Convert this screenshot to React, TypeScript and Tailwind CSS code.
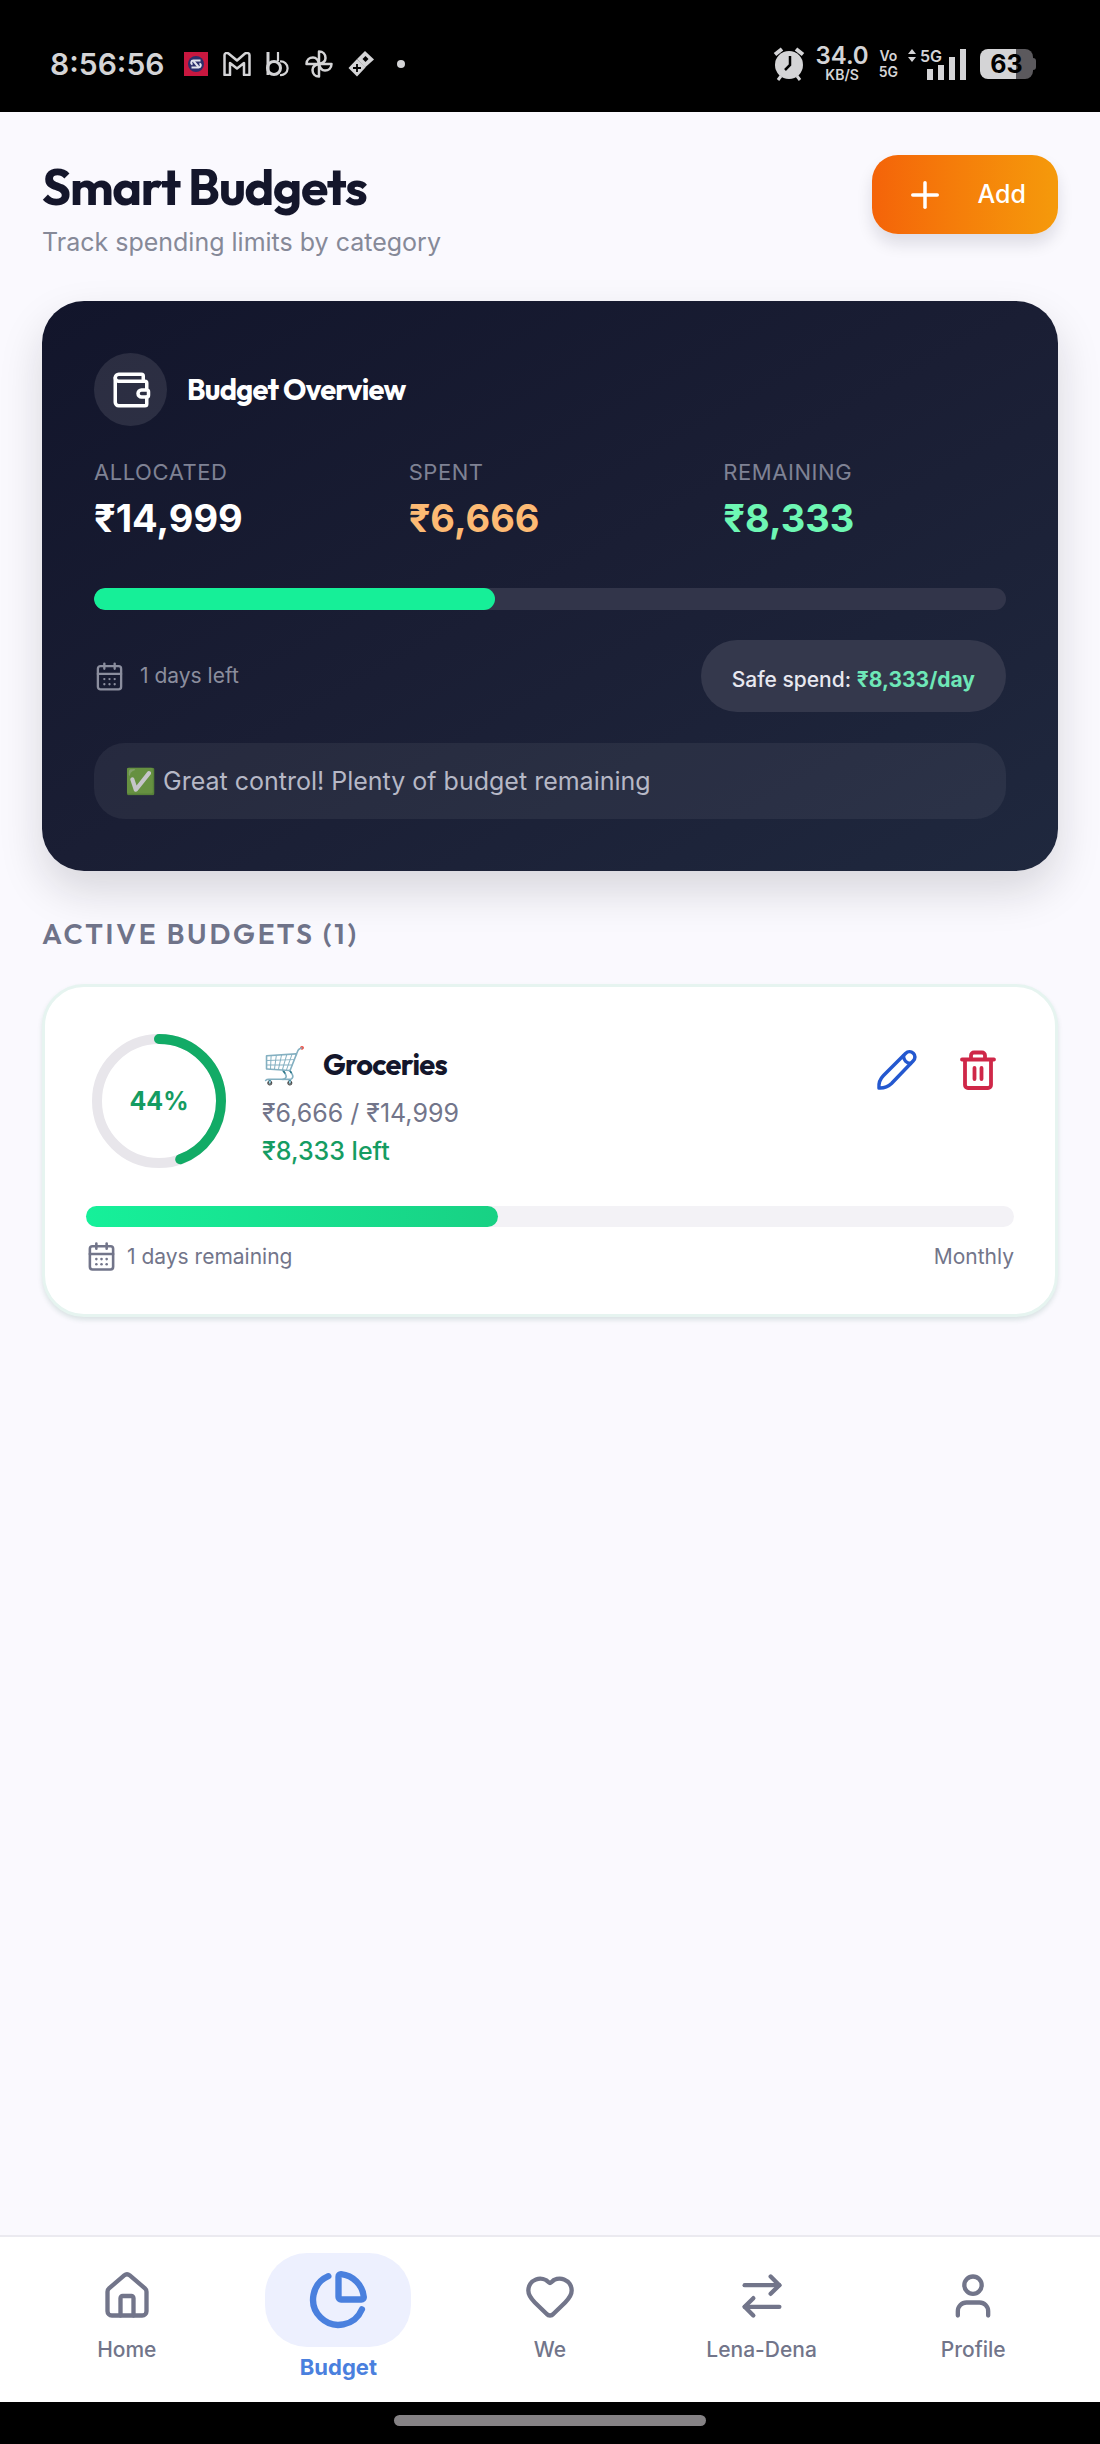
import { type FunctionComponent, type ReactNode } from "react";
import {
  ArrowRightLeft,
  CalendarDays,
  ChartPie,
  Heart,
  House,
  Plus,
  User,
  Wallet,
} from "lucide-react";

const spent = 6666;
const allocated = 14999;
const percent = (spent / allocated) * 100;

const AlarmIcon: FunctionComponent = () => (
  <svg viewBox="0 0 32 34" className="h-[34px] w-8" aria-hidden="true">
    <path d="M2 7.500 9 2M23 2l7 5.500" stroke="#d4d4d6" strokeWidth="4" />
    <path d="M8 29l-3 4M24 29l3 4" stroke="#d4d4d6" strokeWidth="3" />
    <circle cx="16" cy="18" r="14" fill="#d4d4d6" />
    <path d="M17 9v9l-5 5" fill="none" stroke="#000" strokeWidth="2.500" />
  </svg>
);

const NotificationIcons: FunctionComponent = () => (
  <div className="flex items-center gap-[15px] text-[#d4d4d6]">
    <svg viewBox="0 0 24 24" className="size-6" aria-hidden="true">
      <rect width="24" height="24" fill="#c8173f" />
      <circle cx="12" cy="12" r="8" fill="#2c2f6b" />
      <g fill="none" stroke="#e4e4ee" strokeWidth="2">
        <path d="M16.500 8.500H9.500a2.200 2.200 0 0 0-1 4.200" />
        <path d="M7.500 15.500h7a2.200 2.200 0 0 0 1-4.200" />
        <path d="M9.500 9l5 6" />
      </g>
    </svg>
    <svg
      viewBox="0 0 28 24"
      className="h-6 w-7"
      fill="none"
      stroke="currentColor"
      strokeWidth="2.500"
      strokeLinejoin="round"
      aria-hidden="true"
    >
      <path d="M1.500 3v20H7V11l7 5.500L21 11v12h5.500V3c0-2-3-2.500-4.500-1.500L14 8.500 5.500 1.500C4 .5 1.500 1 1.500 3z" />
    </svg>
    <svg
      viewBox="0 0 24 26"
      className="h-[26px] w-6"
      fill="none"
      stroke="currentColor"
      strokeWidth="3"
      aria-hidden="true"
    >
      <path d="M2 1v23" />
      <circle cx="8" cy="17" r="6.500" />
      <path d="M12 1v9M14 10.500a6.800 6.800 0 1 1 0 13.500" strokeWidth="2.200" />
    </svg>
    <svg
      viewBox="0 0 28 28"
      className="size-7"
      fill="none"
      stroke="currentColor"
      strokeWidth="2.500"
      strokeLinejoin="round"
      aria-hidden="true"
    >
      <path d="M14 14V1.500c4 0 6.500 3 6.500 6.500 0 2.500-1.500 5-6.500 6z" />
      <path d="M14 14h12.500c0 4-3 6.500-6.500 6.500-2.500 0-5-1.500-6-6.500z" />
      <path d="M14 14v12.500c-4 0-6.500-3-6.500-6.500 0-2.500 1.500-5 6.500-6z" />
      <path d="M14 14H1.500c0-4 3-6.500 6.500-6.500 2.500 0 5 1.500 6 6.500z" />
    </svg>
    <svg viewBox="0 0 26 26" className="size-[26px]" aria-hidden="true">
      <path d="M17 0l9 8.500-9 8-8-8.500z" fill="currentColor" />
      <path d="M9 8l8.500 8.500L9 25.500 .5 17z" fill="currentColor" />
      <path d="M17.500 5l3 3-3 3-3-3z" fill="#000" />
      <path d="M5 17h8M9 13v8" stroke="#000" strokeWidth="1.800" />
    </svg>
    <span className="ml-2 size-2 rounded-full bg-[#d4d4d6]" />
  </div>
);

const StatusBar: FunctionComponent = () => (
  <div className="flex h-28 items-center justify-between bg-black pr-16 pl-[50px] pt-4 text-[#d4d4d6]">
    <div className="flex items-center gap-5">
      <span className="text-[30px] leading-8 font-semibold">8:56:56</span>
      <NotificationIcons />
    </div>
    <div className="flex items-center gap-[10px]">
      <AlarmIcon />
      <div className="flex flex-col items-center font-semibold">
        <span className="text-2xl leading-[22px]">34.0</span>
        <span className="text-sm leading-4">KB/S</span>
      </div>
      <div className="flex flex-col items-center text-sm leading-4 font-semibold">
        <span>Vo</span>
        <span>5G</span>
      </div>
      <div className="relative h-8 w-[58px]">
        <svg viewBox="0 0 58 32" className="h-8 w-[58px]" aria-hidden="true">
          <path d="M0 6l4-5 4 5zM0 9l4 5 4-5z" fill="currentColor" />
          <path
            d="M19 21h6v11h-6zM30 17h6v15h-6zM41 9h6v23h-6zM52 1h6v31h-6z"
            fill="currentColor"
          />
        </svg>
        <span className="absolute top-0 left-3 text-base leading-4 font-semibold">
          5G
        </span>
      </div>
      <div className="ml-1 flex items-center">
        <div className="flex h-[30px] w-[53px] items-center justify-center rounded-lg bg-linear-to-r from-[#d4d4d6] from-68% to-[#5b595d] to-68% text-[25px] leading-7 font-bold text-black">
          63
        </div>
        <span className="h-3 w-[3px] rounded-r-full bg-[#5b595d]" />
      </div>
    </div>
  </div>
);

const Stat: FunctionComponent<{
  label: string;
  value: string;
  color: string;
}> = ({ label, value, color }) => (
  <div>
    <dt className="text-[22px] leading-7 tracking-wide text-[#7f8294] uppercase">
      {label}
    </dt>
    <dd className={`mt-2 text-[38px] leading-12 font-bold ${color}`}>
      {value}
    </dd>
  </div>
);

const BudgetOverview: FunctionComponent = () => (
  <section className="mt-[43px] rounded-[42px] bg-linear-to-br from-[#12152b] via-[#1a1e34] to-[#1f283e] p-[52px] shadow-[0_20px_44px_rgba(20,20,30,0.15)]">
    <div className="flex items-center gap-5">
      <span className="flex size-[73px] items-center justify-center rounded-full bg-white/10 text-white">
        <Wallet size={42} strokeWidth={2} />
      </span>
      <h2 className="font-['Outfit','Lato',sans-serif] text-[29px] leading-9 font-bold tracking-tight text-white">
        Budget Overview
      </h2>
    </div>
    <dl className="mt-8 grid grid-cols-3 gap-8">
      <Stat label="Allocated" value="₹14,999" color="text-white" />
      <Stat label="Spent" value="₹6,666" color="text-[#fdba74]" />
      <Stat label="Remaining" value="₹8,333" color="text-[#6ef7b4]" />
    </dl>
    <div className="mt-[46px] h-[22px] overflow-hidden rounded-full bg-[#32354a]">
      <div
        className="h-full rounded-full bg-[#16ef98]"
        style={{ width: `${Math.floor(percent)}%` }}
      />
    </div>
    <div className="mt-[30px] flex items-center justify-between">
      <span className="flex items-center gap-[15px] text-[21px] leading-7 text-[#8b8e9e]">
        <CalendarDays size={31} strokeWidth={1.8} />1 days left
      </span>
      <span className="rounded-full bg-[#34384c] px-[31px] pt-[26px] pb-[18px] text-[21px] leading-7 font-medium text-[#e8e8f0]">
        Safe spend: <strong className="text-[#6ee7b7]">₹8,333/day</strong>
      </span>
    </div>
    <p className="mt-[31px] rounded-[31px] bg-white/6 px-[31px] py-5 text-[25px] leading-9 text-[#b6b8c6]">
      <span className="opacity-75">✅</span> Great control! Plenty of budget
      remaining
    </p>
  </section>
);

const ProgressRing: FunctionComponent = () => (
  <div className="grid size-[146px] shrink-0 place-items-center">
    <svg
      viewBox="0 0 146 146"
      className="col-start-1 row-start-1 size-full -rotate-90"
      fill="none"
      strokeWidth="10"
      aria-hidden="true"
    >
      <circle cx="73" cy="73" r="62" stroke="#e8e6eb" />
      <circle
        cx="73"
        cy="73"
        r="62"
        stroke="#12ab66"
        pathLength="100"
        strokeDasharray={`${percent} 100`}
        strokeLinecap="round"
      />
    </svg>
    <span className="col-start-1 row-start-1 text-[25px] leading-8 font-bold text-[#159c62]">
      {Math.floor(percent)}%
    </span>
  </div>
);

const BudgetCard: FunctionComponent = () => (
  <article className="mt-8 rounded-[42px] border-3 border-[#e6f4f0] bg-white px-[41px] pt-[41px] pb-[42px] shadow-[0_3px_5px_rgba(30,90,70,0.14)]">
    <div className="flex items-start">
      <ProgressRing />
      <div className="ml-[30px] flex-1 pt-2">
        <div className="flex h-[58px] items-center gap-4">
          <span className="text-[36px] leading-[44px]">🛒</span>
          <h3 className="font-['Outfit','Lato',sans-serif] text-[29px] leading-9 font-bold tracking-tight text-[#14162b]">
            Groceries
          </h3>
        </div>
        <p className="text-[25px] leading-[38px] text-[#72758a]">
          ₹6,666 / ₹14,999
        </p>
        <p className="text-[25px] leading-[38px] font-medium text-[#159c62]">
          ₹8,333 left
        </p>
      </div>
      <div className="flex gap-2">
        <button
          type="button"
          aria-label="Edit budget"
          className="flex h-[84px] w-[73px] items-center justify-center text-[#2458cf]"
        >
          <svg
            viewBox="0 0 42 42"
            className="size-[42px]"
            fill="none"
            stroke="currentColor"
            strokeWidth="3.500"
            strokeLinecap="round"
            strokeLinejoin="round"
            aria-hidden="true"
          >
            <path d="M3 39c-.5-5 1-9 4.500-12.500L29.500 4.500c2.500-2.500 5.700-2.200 7.800-.2s2.300 5.200-.2 7.700L15.500 34.500C11.500 38.300 8 39.300 3 39z" />
            <path d="M27.500 7c0 4 3 7 7 7.500" />
          </svg>
        </button>
        <button
          type="button"
          aria-label="Delete budget"
          className="flex h-[84px] w-[73px] items-center justify-center text-[#cf2748]"
        >
          <svg
            viewBox="0 0 42 42"
            className="size-[42px]"
            fill="none"
            stroke="currentColor"
            strokeWidth="3.800"
            strokeLinecap="round"
            strokeLinejoin="round"
            aria-hidden="true"
          >
            <path d="M5 10.500h32M8 10.500V36a3 3 0 0 0 3 3h20a3 3 0 0 0 3-3V10.500M14 10.500V6.500a3 3 0 0 1 3-3h8a3 3 0 0 1 3 3v4" />
            <path d="M17.500 19v11M24.500 19v11" />
          </svg>
        </button>
      </div>
    </div>
    <div className="mt-8 h-[21px] rounded-full bg-[#f3f2f6]">
      <div
        className="h-full rounded-full bg-linear-to-r from-[#16f09a] to-[#18d184]"
        style={{ width: `${percent}%` }}
      />
    </div>
    <div className="mt-[14px] flex items-center justify-between text-[21px] leading-[31px] text-[#72758a]">
      <span className="flex items-center gap-[10px]">
        <CalendarDays size={31} strokeWidth={2} />1 days remaining
      </span>
      <span>Monthly</span>
    </div>
  </article>
);

const NavItem: FunctionComponent<{
  label: string;
  children: ReactNode;
  active?: boolean;
}> = ({ label, children, active }) => (
  <a
    href="#"
    aria-current={active ? "page" : undefined}
    className={
      active
        ? "flex flex-col items-center gap-[6px] text-[22px] leading-7 font-bold text-[#4a80de]"
        : "flex flex-col items-center gap-[14px] text-[21px] leading-7 font-medium text-[#72758a]"
    }
  >
    {active ? (
      <span className="flex h-[94px] w-[146px] items-center justify-center rounded-[42px] bg-[#edf0fe]">
        {children}
      </span>
    ) : (
      children
    )}
    {label}
  </a>
);

export default function App() {
  return (
    <div className="flex min-h-screen flex-col bg-[#faf9fe] font-['Inter',sans-serif]">
      <StatusBar />
      <main className="flex-1 px-[42px] pt-[43px]">
        <header className="flex items-start justify-between">
          <div>
            <h1 className="font-['Outfit','Lato',sans-serif] text-[50px] leading-[64px] font-bold tracking-tight text-[#14162b]">
              Smart Budgets
            </h1>
            <p className="mt-[7px] text-[25px] leading-8 text-[#868998]">
              Track spending limits by category
            </p>
          </div>
          <button
            type="button"
            className="flex h-[79px] items-center gap-8 rounded-[26px] bg-linear-to-r from-[#f46309] to-[#f59a0b] px-8 text-[25px] font-medium text-white shadow-[0_10px_16px_rgba(20,20,40,0.12)]"
          >
            <Plus size={42} strokeWidth={2} />
            Add
          </button>
        </header>
        <BudgetOverview />
        <h2 className="mt-[45px] font-['Outfit','Lato',sans-serif] text-[28px] leading-9 font-semibold tracking-widest text-[#6f7389] uppercase">
          Active Budgets (1)
        </h2>
        <BudgetCard />
      </main>
      <nav className="grid h-[167px] grid-cols-5 items-center border-t-2 border-[#ebeaf0] bg-white px-[21px] pb-[6px]">
        <NavItem label="Home">
          <House size={52} />
        </NavItem>
        <NavItem label="Budget" active>
          <ChartPie size={61} strokeWidth={2.5} />
        </NavItem>
        <NavItem label="We">
          <Heart size={52} />
        </NavItem>
        <NavItem label="Lena-Dena">
          <ArrowRightLeft size={52} />
        </NavItem>
        <NavItem label="Profile">
          <User size={52} />
        </NavItem>
      </nav>
      <div className="flex h-[42px] items-center justify-center bg-black pb-[6px]">
        <span className="h-[11px] w-[312px] rounded-full bg-[#858285]" />
      </div>
    </div>
  );
}
